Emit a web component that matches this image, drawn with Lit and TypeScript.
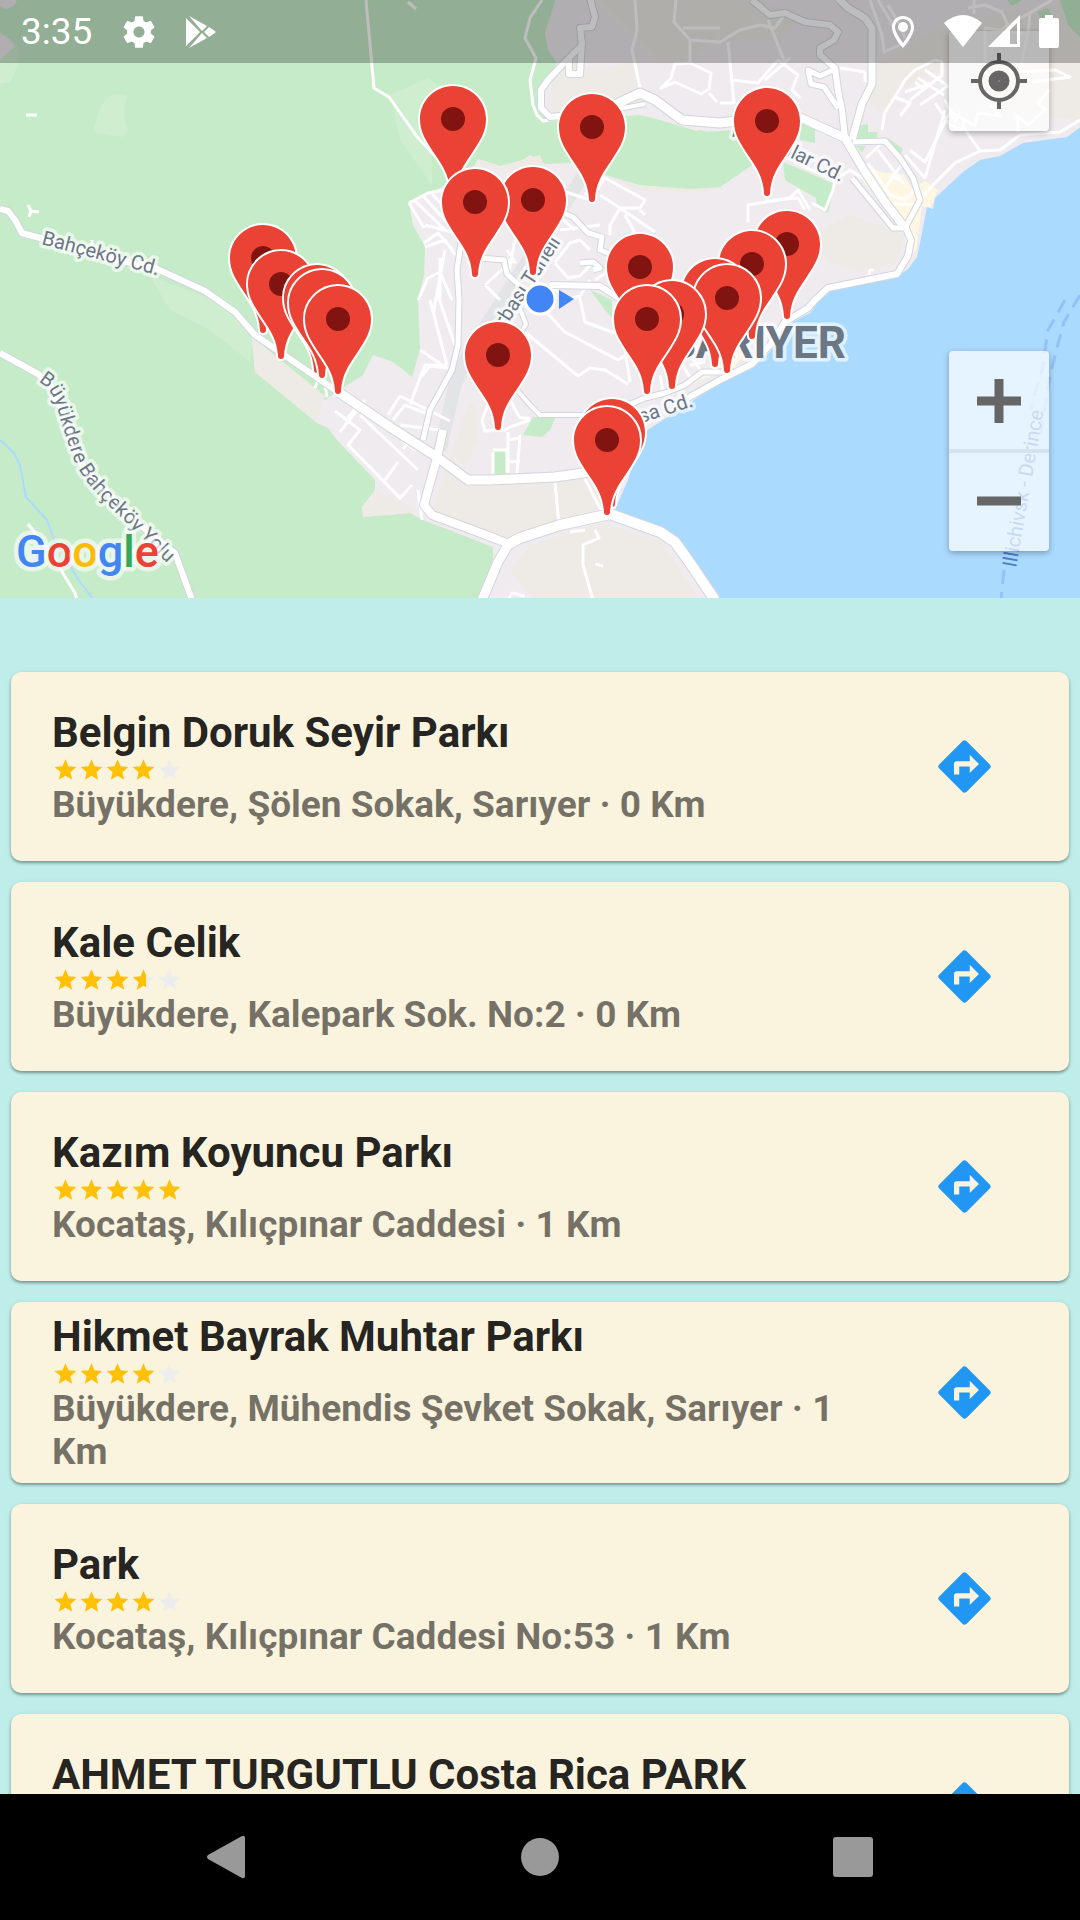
import { LitElement, html, svg, css } from "lit";
import { customElement, property } from "lit/decorators.js";
import { classMap } from "lit/directives/class-map.js";

interface Place {
  name: string;
  info: string;
  rating: number;
  threeLine?: boolean;
}

const PLACES: Place[] = [
  { name: "Belgin Doruk Seyir Parkı", info: "Büyükdere, Şölen Sokak, Sarıyer · 0 Km", rating: 4 },
  { name: "Kale Celik", info: "Büyükdere, Kalepark Sok. No:2 · 0 Km", rating: 3.6 },
  { name: "Kazım Koyuncu Parkı", info: "Kocataş, Kılıçpınar Caddesi · 1 Km", rating: 5 },
  { name: "Hikmet Bayrak Muhtar Parkı", info: "Büyükdere, Mühendis Şevket Sokak, Sarıyer · 1 Km", rating: 4, threeLine: true },
  { name: "Park", info: "Kocataş, Kılıçpınar Caddesi No:53 · 1 Km", rating: 4 },
  { name: "AHMET TURGUTLU Costa Rica PARK", info: "", rating: 4 },
];

const PINS: [number, number][] = [
  [453, 119], [767, 121], [592, 127], [533, 200], [475, 202], [787, 244], [263, 258],
  [752, 264], [640, 267], [281, 284], [715, 292], [727, 298], [317, 298], [322, 303],
  [672, 314], [338, 319], [647, 319], [498, 355], [612, 432], [607, 440],
];

const PIN_SHAPE =
  "M0-33C18-33 33-18 33 0C33 14 26 23 19 34C10 47 4 56 3 72Q3 75 0 75Q-3 75-3 72C-4 56-10 47-19 34C-26 23-33 14-33 0C-33-18-18-33 0-33Z";

/* Roads as [width, path]; each also gets a grey casing. */
const ROADS: [number, string][] = [
  [6, "M0 209L8 211L15 220L22 233L40 238L100 256L155 268L205 291L222 303L235 312L255 335L338 392L360 407"],
  [9, "M340 393L390 427L437 457L468 480L490 480L555 477L590 472"],
  [6, "M0 353L38 374L50 385L62 410L75 450L85 470L140 525L175 553L192 600"],
  [6, "M590-2L595 17L592 27L580 28L582 45L563 64L548 80L541 90L541 108L550 117L570 115"],
  [6, "M569 58V74H580L582 40"],
  [9, "M600 112L625 100L640 93L655 100L682 120L720 123L760 118"],
  [4, "M612 110L645 104M610 104L640 96"],
  [6, "M752 0L770 15L785 13L805 22L830 25L838 32L834 40L820 48V55L835 68L838 90L842 110L845 138"],
  [7, "M838-2L848 8L865 18L872 28V84L862 104L852 140"],
  [5, "M833 70L820 76L808 70L811 84L824 87L838 108"],
  [8, "M797 116L845 138L852 150L865 172L885 202L905 228"],
  [5, "M853 142L885 141L900 158L913 178L920 200L905 228L893 228L852 178"],
  [6, "M905 226L911 240L908 256L897 274L828 288L815 300L808 308L785 322L770 345L752 364L720 380L688 398"],
  [5, "M725 372L702 372L685 385L665 393L645 398L626 406"],
  [5, "M466 210L457 270L459 300L458 345L452 370L430 410L423 440"],
  [8, "M443 430L437 458L428 490L424 505L432 515L470 529L512 545"],
  [10, "M507 545L520 538L560 525L610 514L660 532L675 542L690 563L715 600"],
  [9, "M508 545L498 562L482 600"],
  [5, "M555 210L573 217L588 233L602 237L600 250L610 254"],
  [6, "M550 285L600 286L625 302"],
  [4, "M518 304L526 324L518 338M517 390L530 405L540 415L590 415"],
  [5, "M480 258L504 260L507 274L520 286"],
  [5, "M580 263L593 262L600 268L593 270"],
];

const LANES = [
  "M366 0L374 88L389 97L418 138L437 158L448 175",
  "M542 0L530 18L525 38L536 58L530 80L533 105L537 115L543 121L560 118",
  "M408 2L416 9",
  "M635 0L637 30L632 50L640 88",
  "M676 0L674 22L690 40L720 42M683 28H720M690 40V63L675 64L671 78L661 88L675 82L701 94L709 89L711 73L690 63M709 93L717 102",
  "M720 42L740 30L760 25L775 28L785 14M728 42L734 103H720M733 80L758 83L778 60L798 75L792 90L800 98M768 20L785 63",
  "M765 80L790 58M840 68L865 72M865 72V82M870 0L882 35L884 52L900 45L890 20L878 0",
  "M888 5L900 25L905 38M974 0V14M1010 30L1002 12L985 5L968 8M1000 30L1052 0M985 75V28L1028 34L1030 12M1020 72L1028 30",
  "M882 130L885 112L895 97L905 80L915 70L935 60L942 62V75L910 100M895 97L910 103L900 116M915 82L925 90M905 92L935 82M918 78L944 95M925 70L948 86L920 105",
  "M905 155L925 178L945 110M910 150L925 162L950 112M935 103L950 125L962 130L965 118M948 110L975 126L978 113L1000 116L990 105M962 125L980 151M945 100L955 122L960 112",
  "M1080 120L1060 132L1020 135L1000 150L980 151L955 163L930 188L920 200M1018 132L1017 116L1028 125L1045 110L1038 103L1050 90",
  "M1010 72L1055 70L1070 77L1032 82M866 158L880 145M868 163L890 195L905 200L914 190M885 188L905 160M878 150L902 182M893 176L905 184M893 204H915",
  "M748 222V205L790 198L798 190L810 210M765 201L798 198L805 210M835 180L833 190L825 210L812 203M800 165L835 180L850 170L862 178",
  "M409 203L428 193L445 190L448 200M409 203L424 228M415 201L445 230M424 197L452 228M432 194L455 218M425 225L455 233M424 243L438 233L453 250",
  "M425 247L445 240L455 255M418 300L428 278L440 272L452 300M433 315L445 250M437 293L455 345M430 300L447 365M420 350L447 368L430 366L420 378",
  "M440 258V300M485 285L500 300M507 265L485 285M515 240L508 275L518 284",
  "M575 165L600 155M580 175L605 165M560 190L590 200L605 178L645 200L640 208L620 208L600 195M640 210L645 215M605 178L585 195",
  "M620 208L655 232M620 208L610 225V235M625 215L635 233M560 217L575 230M560 230L600 225M590 250L580 240L570 243L555 262",
  "M555 263L568 278L580 276L590 265M595 280L610 270M500 260L515 262L507 250M550 283L565 300L580 296L590 280",
  "M580 298L585 322L620 335L630 345L625 350L630 382M548 314L565 332L618 360L630 353M525 332L578 376L590 368L605 370L628 384",
  "M500 375L482 420L485 431L505 430L510 427L530 420M510 400L520 418L530 418M508 432V473M520 435L517 473M508 440L520 438M508 462L520 461M493 452V474",
  "M507 473V450H493M340 432L365 400M335 411L360 430L348 445L400 498L412 485M385 480L398 462M360 415L418 470M348 418L358 405",
  "M388 415L400 396L450 421M393 420L405 405L425 413M410 404L425 365H447M400 425L440 430M403 449L410 440M418 490L422 520",
  "M660 375L663 392M670 365L673 388M680 360L690 378M690 355L702 372M690 365L705 362",
  "M555 483L559 525M583 475L602 512M595 530L599 538L583 545V565L593 600M570 532L585 530",
  "M595 564L603 566M508 600L512 593L525 596M26 115H37M28 205L31 211L29 217M31 211L39 212M92 240V246M869 275L870 270H874",
  "M28 524L50 552L75 593L77 600M315 388L318 380L325 384L327 397",
];

@customElement("star-rating")
export class StarRating extends LitElement {
  static styles = css`
    :host {
      display: block;
      height: 26px;
    }
    .stars {
      display: block;
      width: 131px;
      height: 26px;
    }
    .off {
      fill: #ededed;
    }
    .on {
      fill: #ffc107;
    }
  `;

  @property({ type: Number }) value = 0;

  private star(i: number, part: number) {
    const path = `M12 17.27L18.18 21l-1.64-7.03L22 9.24l-7.19-.61L12 2 9.19 8.63 2 9.24l5.46 4.73L5.82 21z`;
    return svg`<svg x=${i * 24} width="24" height="24" viewBox="0 0 24 24">
      ${part < 1 ? svg`<path class="off" d=${path}></path>` : ""}
      ${part > 0 ? svg`<svg width=${24 * part} height="24"><path class="on" d=${path}></path></svg>` : ""}
    </svg>`;
  }

  render() {
    return html`<svg class="stars" viewBox="0 0 120 24" role="img" aria-label="${this.value} / 5">
      ${[0, 1, 2, 3, 4].map((i) => this.star(i, Math.max(0, Math.min(1, this.value - i))))}
    </svg>`;
  }
}

@customElement("place-card")
export class PlaceCard extends LitElement {
  static styles = css`
    :host {
      display: block;
      flex: none;
    }
    .card {
      box-sizing: border-box;
      display: flex;
      align-items: center;
      gap: 42px;
      min-height: 189px;
      padding: 10px 42px 10px 41px;
      border-radius: 10px;
      background: #faf3dd;
      box-shadow: 0 2px 3px rgba(0, 0, 0, 0.32), 0 1px 5px rgba(0, 0, 0, 0.1);
    }
    .three-line {
      min-height: 181px;
    }
    .text {
      flex: 1;
      min-width: 0;
    }
    .name {
      margin: 0;
      font-size: 42px;
      line-height: 49px;
      font-weight: 700;
      color: rgba(0, 0, 0, 0.87);
    }
    .info {
      min-height: 43px;
      margin: 0;
      font-size: 37px;
      line-height: 43px;
      font-weight: 700;
      color: rgba(0, 0, 0, 0.54);
    }
    .go {
      flex: none;
      display: grid;
      place-items: center;
      width: 126px;
      height: 126px;
      padding: 0;
      border: 0;
      background: none;
    }
    .go svg {
      display: block;
      width: 63px;
      height: 63px;
      fill: #2196f3;
    }
  `;

  @property({ attribute: false }) place!: Place;

  render() {
    const p = this.place;
    return html`<article class=${classMap({ card: true, "three-line": !!p.threeLine })}>
      <div class="text">
        <h2 class="name">${p.name}</h2>
        <star-rating .value=${p.rating}></star-rating>
        <p class="info">${p.info}</p>
      </div>
      <button class="go" aria-label="Yol tarifi">
        <svg viewBox="0 0 24 24">
          <path
            d="M21.71 11.29l-9-9c-.39-.39-1.02-.39-1.41 0l-9 9c-.39.39-.39 1.02 0 1.41l9 9c.39.39 1.02.39 1.41 0l9-9c.39-.38.39-1.01 0-1.41zM14 14.5V12h-4v3H8v-4c0-.55.45-1 1-1h5V7.5l3.5 3.5-3.5 3.5z"
          ></path>
        </svg>
      </button>
    </article>`;
  }
}

@customElement("area-map")
export class AreaMap extends LitElement {
  static styles = css`
    :host {
      display: block;
      position: relative;
      height: 598px;
      overflow: hidden;
      background: #c6ebc8;
    }
    .canvas {
      display: block;
      width: 100%;
      height: 100%;
    }
    .land { fill: #efebef; }
    .sand { fill: #eeebe6; }
    .shops { fill: #fff6e3; }
    .park { fill: #c6ebc8; }
    .meadow { fill: #ceeecf; }
    .water { fill: #abdaff; }
    .line {
      fill: none;
      stroke-linejoin: round;
    }
    .casing { stroke: #d3d5dd; }
    .road { stroke: #fff; }
    .lane {
      stroke: #fff;
      stroke-width: 3px;
    }
    .rail {
      stroke: #e2e4e6;
      stroke-width: 13px;
    }
    .stream {
      stroke: #abdaff;
      stroke-width: 2px;
    }
    .ferry {
      stroke: #93c2fb;
      stroke-width: 3px;
      stroke-dasharray: 14 8;
    }
    .label {
      font-family: Roboto, sans-serif;
      font-size: 20px;
      fill: #6b7785;
      stroke: rgba(255, 255, 255, 0.65);
      stroke-width: 7px;
      stroke-linejoin: round;
      paint-order: stroke;
    }
    .district {
      font-size: 44px;
      font-weight: 700;
    }
    .ferry-name {
      fill: #4a7fd0;
      stroke: none;
    }
    .pin {
      fill: #ea4335;
      stroke: #fff;
      stroke-width: 4px;
      paint-order: stroke;
    }
    .dot { fill: #811411; }
    .me {
      fill: #4285f4;
      stroke: #fff;
      stroke-width: 3px;
    }
    .heading { fill: #4285f4; }
    .logo {
      font-family: Roboto, sans-serif;
      font-size: 45px;
      font-weight: 500;
      stroke: rgba(255, 255, 255, 0.6);
      stroke-width: 9px;
      stroke-linejoin: round;
      paint-order: stroke;
    }
    .b { fill: #4285f4; }
    .r { fill: #ea4335; }
    .y { fill: #fbbc05; }
    .g { fill: #34a853; }
    .controls {
      position: absolute;
      top: 31px;
      right: 31px;
      display: flex;
      flex-direction: column;
      gap: 220px;
    }
    .box {
      display: flex;
      flex-direction: column;
      border-radius: 4px;
      background: rgba(255, 255, 255, 0.7);
      box-shadow: 0 2px 6px rgba(0, 0, 0, 0.3);
    }
    .control {
      display: grid;
      place-items: center;
      width: 100px;
      height: 100px;
      padding: 0;
      border: 0;
      background: none;
    }
    .control + .control {
      box-shadow: 0 -2px 0 #d5e3ef, inset 0 2px 0 #d5e3ef;
    }
    .control svg {
      display: block;
      width: 60px;
      height: 60px;
      fill: none;
      stroke: #666;
    }
  `;

  private pin([x, y]: [number, number]) {
    return svg`<g transform="translate(${x} ${y})"><path class="pin" d=${PIN_SHAPE}></path><circle class="dot" r="12"></circle></g>`;
  }

  render() {
    return html`
      <svg class="canvas" viewBox="0 0 1080 598" preserveAspectRatio="xMidYMid slice">
        <path class="meadow" d="M94 130Q100 96 116 94L127 96Q121 120 129 130L136 121L123 137L97 133ZM0 84V30L20 48Q18 70 10 82ZM146 270L170 310L210 330L250 362L255 330L215 300L160 280ZM390 95L428 78L445 90L432 160L432 185L400 140Z"></path>
        <path class="land" d="M0 0H17Q14 8 5 9L0 7ZM0 34Q12 38 14 47L0 60Z"></path>
        <path
          class="land"
          d="M556-2L545 33L548 50L557 63L541 90L541 115L560 121L600 118L640 115L660 120L700 132L740 130L760 160L720 187L690 189L640 185L605 175L590 162L545 164L530 155L520 162L500 166L478 159L475 165L440 188L409 203L413 225L425 247L424 275L418 300L420 350L412 377L393 362L373 355L363 375L325 400L252 337L255 372L277 390L317 423L328 428L337 440L375 480L375 493L362 507L363 517L410 513L423 520L493 547L493 563L478 600H1082V-2Z"
        ></path>
        <path class="sand" d="M252 337L255 372L277 390L317 423L325 396ZM362 507L375 490L420 512L410 513L363 517ZM450 455L470 480L590 475L612 510L510 538L432 512ZM530 545L600 523L660 540L700 600H535L510 570ZM570 60L600 70L640 60L640 95L600 110L545 115L553 80ZM600 0H720V30L690 63L660 60L620 20ZM720 40H780L800 20L760 0H720ZM875 65L950 22L1080 0V120L1000 110L960 60L900 90L885 115L870 105ZM815 232L850 215L905 235L897 262L860 272L825 260ZM478 159L475 165L500 170L545 168L540 155L500 166ZM467 410L475 400L478 440L465 465L450 455ZM605 175L640 185L700 189L720 187L700 193L640 191Z"></path>
        <path class="shops" d="M863 162L880 172L903 174L912 188L925 181L938 190L930 208L922 206L916 252L908 250L903 225L860 178ZM393 422L422 450L415 452L390 433ZM688 388L718 366L740 366L700 380ZM735 355L750 350L730 370Z"></path>
        <path class="park" d="M630 120L650 117L680 134L700 130L733 138L745 160L720 187L690 189L640 185L610 176ZM783 162L835 184L828 213L817 208L816 198L785 180ZM800 120L815 126V143L800 140ZM858 126L868 124V132L878 132L876 140L858 142ZM856 146H866L862 152ZM888 138L903 149L900 156L890 148ZM1060 0H1080V37L1068 25ZM1007 0H1022L1012 6ZM1037 12L1048 8L1052 17L1042 20ZM523 435L533 417L556 417L550 430L542 437ZM493 451H509V474H493ZM590 290L612 300V318L605 310Z"></path>
        <path
          class="water"
          d="M1082 126L1067 137L1023 143L1000 156L980 160L963 172L935 198L933 209L927 207L922 233L917 257L908 269L897 277L830 291L820 300L810 313L787 325L770 352L753 368L720 383L643 433L628 480L614 512L662 530L675 542L692 565L715 600H1082Z"
        ></path>
        <path class="line stream" d="M0 440L14 453L20 465L26 497L47 520L54 540L80 582L94 600"></path>
        <path class="line rail" d="M590 165L470 350L455 385L440 450"></path>
        <path class="line lane" d=${LANES.join("")}></path>
        ${ROADS.map(([w, d]) => svg`<path class="line casing" stroke-width=${w + 2} d=${d}></path>`)}
        ${ROADS.map(([w, d]) => svg`<path class="line road" stroke-width=${w} d=${d}></path>`)}
        <path class="line ferry" d="M1065 300L1048 330L1042 370L1030 410M1080 295L1064 322L1050 375L1046 400L1040 440M1004 570L1001 600"></path>

        <path id="yolu" fill="none" d="M38 382C54 388 57 408 62 425L74 460C81 477 98 497 123 519L173 569"></path>
        <text class="label" transform="translate(41 244) rotate(15)">Bahçeköy Cd.</text>
        <text class="label"><textPath href="#yolu">Büyükdere Bahçeköy Yolu</textPath></text>
        <text class="label" text-anchor="end" transform="translate(561 242) rotate(-57)">Çayırbaşı Tüneli</text>
        <text class="label" transform="translate(785 155) rotate(26)">ılar Cd.</text>
        <text class="label" transform="translate(731 136) rotate(20)">r</text>
        <text class="label" text-anchor="end" transform="translate(694 406) rotate(-18)">Piyasa Cd.</text>
        <text class="label district" text-anchor="end" x="846" y="358">SARIYER</text>
        <text class="label ferry-name" transform="translate(1016 568) rotate(-80)">Illichivsk - Derince</text>

        ${PINS.slice(0, 9).map((p) => this.pin(p))}
        <circle class="me" cx="540" cy="299" r="15"></circle>
        <path class="heading" d="M559 290L574 299L559 309Z"></path>
        ${PINS.slice(9).map((p) => this.pin(p))}
        <text class="logo" x="16" y="567"><tspan class="b">G</tspan><tspan class="r">o</tspan><tspan class="y">o</tspan><tspan class="b">g</tspan><tspan class="g">l</tspan><tspan class="r">e</tspan></text>
      </svg>
      <div class="controls">
        <div class="box">
          <button class="control" aria-label="Konumum">
            <svg viewBox="0 0 60 60">
              <circle cx="30" cy="30" r="19" stroke-width="4"></circle>
              <circle cx="30" cy="30" r="5" stroke-width="11"></circle>
              <path d="M30 2V10M30 50V58M2 30H10M50 30H58" stroke-width="4"></path>
            </svg>
          </button>
        </div>
        <div class="box">
          <button class="control" aria-label="Yakınlaştır">
            <svg viewBox="0 0 60 60"><path d="M8 30H52M30 8V52" stroke-width="9"></path></svg>
          </button>
          <button class="control" aria-label="Uzaklaştır">
            <svg viewBox="0 0 60 60"><path d="M8 30H52" stroke-width="9"></path></svg>
          </button>
        </div>
      </div>
    `;
  }
}

@customElement("app-root")
export class AppRoot extends LitElement {
  static styles = css`
    :host {
      display: flex;
      flex-direction: column;
      height: 100vh;
      overflow: hidden;
      background: #bfeeea;
      font-family: Roboto, sans-serif;
    }
    .top {
      flex: none;
      position: relative;
    }
    .status {
      position: absolute;
      inset: 0 0 auto 0;
      box-sizing: border-box;
      display: flex;
      align-items: center;
      gap: 28px;
      height: 63px;
      padding: 0 21px;
      background: rgba(0, 0, 0, 0.26);
      color: #fff;
    }
    .time {
      font-size: 37px;
      line-height: 43px;
    }
    .status svg {
      display: block;
      height: 38px;
      fill: #fff;
    }
    .spacer {
      flex: 1;
    }
    .signals {
      display: flex;
      gap: 4px;
    }
    .power {
      display: flex;
      gap: 18px;
    }
    .list {
      flex: 1;
      min-height: 0;
      overflow: hidden;
      display: flex;
      flex-direction: column;
      gap: 21px;
      padding: 74px 11px 0;
    }
    .nav {
      flex: none;
      display: grid;
      grid-template-columns: 1fr 172px 1fr;
      align-items: center;
      height: 126px;
      background: #000;
    }
    .key {
      justify-self: center;
      padding: 0;
      border: 0;
      background: none;
    }
    .key svg {
      display: block;
      width: 48px;
      height: 48px;
      fill: #999;
    }
  `;

  render() {
    return html`
      <header class="top">
        <area-map></area-map>
        <div class="status">
          <span class="time">3:35</span>
          <svg viewBox="0 0 24 24" width="38">
            <path
              d="M19.43 12.98c.04-.32.07-.64.07-.98s-.03-.66-.07-.98l2.11-1.65c.19-.15.24-.42.12-.64l-2-3.46c-.12-.22-.39-.3-.61-.22l-2.49 1c-.52-.4-1.08-.73-1.69-.98l-.38-2.65C14.46 2.18 14.25 2 14 2h-4c-.25 0-.46.18-.49.42l-.38 2.65c-.61.25-1.17.59-1.69.98l-2.49-1c-.23-.09-.49 0-.61.22l-2 3.46c-.13.22-.07.49.12.64l2.11 1.65c-.04.32-.07.65-.07.98s.03.66.07.98l-2.11 1.65c-.19.15-.24.42-.12.64l2 3.46c.12.22.39.3.61.22l2.49-1c.52.4 1.08.73 1.69.98l.38 2.65c.03.24.24.42.49.42h4c.25 0 .46-.18.49-.42l.38-2.65c.61-.25 1.17-.59 1.69-.98l2.49 1c.23.09.49 0 .61-.22l2-3.46c.12-.22.07-.49-.12-.64l-2.11-1.65zM12 15.5c-1.93 0-3.5-1.57-3.5-3.5s1.57-3.5 3.5-3.5 3.5 1.57 3.5 3.5-1.57 3.5-3.5 3.5z"
            ></path>
          </svg>
          <svg viewBox="0 0 30 38" width="30">
            <path d="M0 5L14 19L0 33ZM3 3L21 13L16 18ZM3 35L21 25L16 20ZM23 14L29 18Q30 19 29 20L23 24L18 19Z"></path>
          </svg>
          <span class="spacer"></span>
          <svg viewBox="0 0 24 38" width="24">
            <path
              fill-rule="evenodd"
              d="M12 3C5 3 1 8 1 14.500C1 23 12 35 12 35S23 23 23 14.500C23 8 19 3 12 3ZM12 6C17 6 20 10 20 14.500C20 20 12 30 12 30S4 20 4 14.500C4 10 7 6 12 6Z"
            ></path>
            <circle cx="12" cy="14" r="5"></circle>
          </svg>
          <span class="power">
            <span class="signals">
              <svg viewBox="0 0 40 38" width="40"><path d="M1 10Q20-6 39 10L20 34Z"></path></svg>
              <svg viewBox="0 0 34 38" width="34"><path d="M1 34L33 2V34ZM23 17V31H30V10Z" fill-rule="evenodd"></path></svg>
            </span>
            <svg viewBox="0 0 20 38" width="20">
              <path d="M6 2H14V5H18Q20 5 20 7V33Q20 35 18 35H2Q0 35 0 33V7Q0 5 2 5H6Z"></path>
            </svg>
          </span>
        </div>
      </header>
      <main class="list">${PLACES.map((p) => html`<place-card .place=${p}></place-card>`)}</main>
      <nav class="nav">
        <button class="key" aria-label="Geri">
          <svg viewBox="0 0 48 48"><path d="M5 22L39 3Q42 2 42 5V43Q42 46 39 45L5 26Q3 24 5 22Z"></path></svg>
        </button>
        <button class="key" aria-label="Ana ekran">
          <svg viewBox="0 0 48 48"><circle cx="24" cy="24" r="19"></circle></svg>
        </button>
        <button class="key" aria-label="Son uygulamalar">
          <svg viewBox="0 0 48 48"><rect x="4" y="4" width="40" height="40" rx="3"></rect></svg>
        </button>
      </nav>
    `;
  }
}
